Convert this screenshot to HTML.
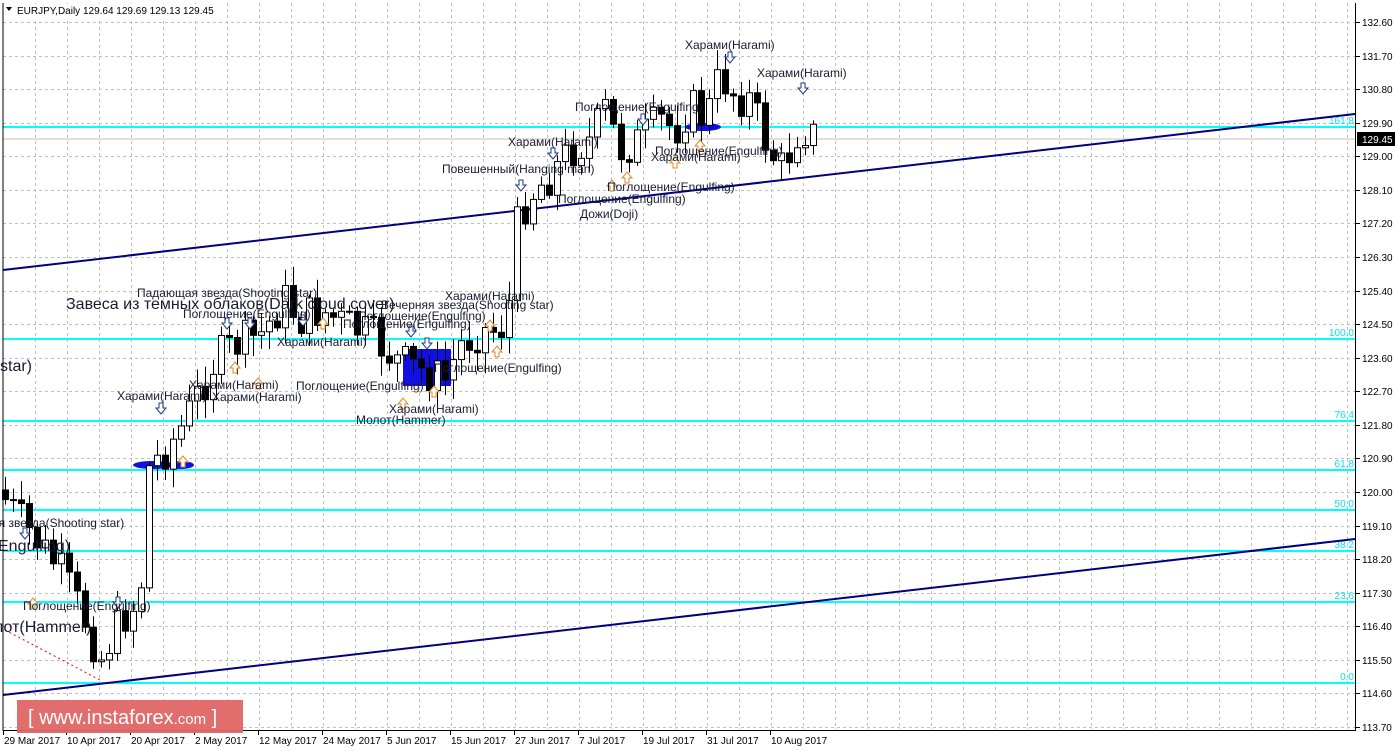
<!DOCTYPE html>
<html><head><meta charset="utf-8"><style>
html,body{margin:0;padding:0;background:#fff;width:1395px;height:751px;overflow:hidden}
svg{display:block}
text{font-family:"Liberation Sans",Arial,sans-serif}
</style></head><body>
<svg id="s" width="1395" height="751" viewBox="0 0 1395 751" xmlns="http://www.w3.org/2000/svg">
<rect width="1395" height="751" fill="#fff"/>
<g id="grid" stroke="#c0c0c0" stroke-dasharray="3,3" stroke-width="1"></g>
<g id="axis" font-size="10" fill="#000"></g>
<g stroke="#00ffff" stroke-width="2">
<line x1="3" y1="127" x2="1355" y2="127"/>
<line x1="3" y1="339" x2="1355" y2="339"/>
<line x1="3" y1="421" x2="1355" y2="421"/>
<line x1="3" y1="470" x2="1355" y2="470"/>
<line x1="3" y1="510" x2="1355" y2="510"/>
<line x1="3" y1="551" x2="1355" y2="551"/>
<line x1="3" y1="602" x2="1355" y2="602"/>
<line x1="3" y1="683" x2="1355" y2="683"/>
</g>
<g fill="#00e5ee" font-size="10" text-anchor="end">
<text x="1354" y="124">161.8</text><text x="1354" y="336">100.0</text>
<text x="1354" y="418">76.4</text><text x="1354" y="467">61.8</text>
<text x="1354" y="507">50.0</text><text x="1354" y="548">38.2</text>
<text x="1354" y="599">23.6</text><text x="1354" y="680">0.0</text>
</g>
<line x1="3" y1="139" x2="1355" y2="139" stroke="#c0c0c0"/>
<line x1="3" y1="270" x2="1355" y2="114" stroke="#000080" stroke-width="2"/>
<line x1="3" y1="695" x2="1355" y2="539" stroke="#000080" stroke-width="2"/>
<line x1="5" y1="630" x2="100" y2="680" stroke="#e00" stroke-dasharray="2,3"/>
<rect x="403" y="349" width="48" height="37" fill="#1010e0"/>
<ellipse cx="153" cy="465" rx="20" ry="4" fill="#1010e0"/>
<ellipse cx="180" cy="465" rx="14" ry="4" fill="#1010e0"/>
<ellipse cx="703" cy="127" rx="18" ry="4" fill="#1010e0"/>
<g id="c"></g>
<g id="arr"></g>
<g fill="#1a1a30" font-size="12">
<text x="685" y="49">Харами(Harami)</text>
<text x="757" y="77">Харами(Harami)</text>
<text x="575" y="111">Поглощение(Engulfing)</text>
<text x="508" y="146">Харами(Harami)</text>
<text x="442" y="173">Повешенный(Hanging man)</text>
<text x="651" y="161">Харами(Harami)</text>
<text x="655" y="155">Поглощение(Engulfing)</text>
<text x="607" y="191">Поглощение(Engulfing)</text>
<text x="558" y="203">Поглощение(Engulfing)</text>
<text x="580" y="218">Дожи(Doji)</text>
<text x="137" y="297">Падающая звезда(Shooting star)</text>
<text x="183" y="318">Поглощение(Engulfing)</text>
<text x="445" y="300">Харами(Harami)</text>
<text x="381" y="309">Вечерняя звезда(Shooting star)</text>
<text x="358" y="320">Поглощение(Engulfing)</text>
<text x="343" y="328">Поглощение(Engulfing)</text>
<text x="277" y="346">Харами(Harami)</text>
<text x="189" y="389">Харами(Harami)</text>
<text x="117" y="400">Харами(Harami)</text>
<text x="212" y="401">Харами(Harami)</text>
<text x="296" y="390">Поглощение(Engulfing)</text>
<text x="434" y="372">Поглощение(Engulfing)</text>
<text x="389" y="413">Харами(Harami)</text>
<text x="356" y="424">Молот(Hammer)</text>
<text x="-8" y="527">ая звезда(Shooting star)</text>
<text x="23" y="610">Поглощение(Engulfing)</text>
<text x="66" y="309" font-size="16">Завеса из темных облаков(Dark cloud cover)</text>
<text x="0" y="371" font-size="16">star)</text>
<text x="-2" y="551" font-size="16">Engulfing)</text>
<text x="-6" y="632" font-size="16">лот(Hammer)</text>
</g>
<line x1="3" y1="3" x2="3" y2="731" stroke="#000"/>
<line x1="3" y1="730.5" x2="1356" y2="730.5" stroke="#000"/>
<line x1="1355.5" y1="3" x2="1355.5" y2="731" stroke="#000"/>
<rect x="1357" y="132" width="38" height="14" fill="#000"/>
<text x="1362" y="143" font-size="10" fill="#fff">129.45</text>
<rect x="4" y="4" width="200" height="14" fill="#fff"/>
<g font-size="10" fill="#000">
<path d="M6 7 L12 7 L9 11Z" fill="#000"/>
<text x="17" y="14">EURJPY,Daily  129.64 129.69 129.13 129.45</text>
</g>
<rect x="17" y="700" width="226" height="33" fill="#e06565" opacity="0.95"/>
<text x="28" y="724" font-size="20" fill="#fff">[ www.instaforex<tspan font-size="15">.com</tspan> ]</text>
</svg>
<script>
(function(){
var NS="http://www.w3.org/2000/svg";
function el(p,t,a){var e=document.createElementNS(NS,t);for(var k in a)e.setAttribute(k,a[k]);p.appendChild(e);return e;}
var g=document.getElementById('grid'),ax=document.getElementById('axis');
for(var x=35;x<1355;x+=32)el(g,'line',{x1:x+.5,y1:3,x2:x+.5,y2:730});
for(var i=0;i<22;i++){var y=22+i*33.57;el(g,'line',{x1:3,y1:Math.round(y)+.5,x2:1355,y2:Math.round(y)+.5});
el(ax,'line',{x1:1356,y1:Math.round(y)+.5,x2:1360,y2:Math.round(y)+.5,stroke:'#000'});
var t=el(ax,'text',{x:1362,y:Math.round(y)+4});t.textContent=(132.6-i*0.9).toFixed(2);}
var dates=[[3,'29 Mar 2017'],[66,'10 Apr 2017'],[130,'20 Apr 2017'],[194,'2 May 2017'],[258,'12 May 2017'],[322,'24 May 2017'],[386,'5 Jun 2017'],[450,'15 Jun 2017'],[514,'27 Jun 2017'],[578,'7 Jul 2017'],[642,'19 Jul 2017'],[706,'31 Jul 2017'],[770,'10 Aug 2017']];
dates.forEach(function(d){el(ax,'line',{x1:d[0]+.5,y1:731,x2:d[0]+.5,y2:735,stroke:'#000'});var t=el(ax,'text',{x:d[0]+1,y:744});t.textContent=d[1];});
var kp=[[5,500],[20,520],[40,545],[60,570],[85,620],[100,660],[110,640],[125,615],[140,600],[147,470],[165,450],[180,430],[195,400],[215,360],[235,345],[260,335],[285,300],[300,320],[320,310],[345,325],[370,335],[395,360],[420,370],[445,380],[460,345],[480,330],[500,330],[510,300],[518,215],[530,195],[550,175],[570,150],[590,140],[605,110],[620,150],[640,140],[660,120],[675,130],[690,105],[705,120],[720,75],[735,95],[750,100],[765,140],[780,170],[790,150],[800,125],[812,135]];
function interp(x){for(var i=0;i<kp.length-1;i++)if(x>=kp[i][0]&&x<=kp[i+1][0]){var a=kp[i],b=kp[i+1];return a[1]+(b[1]-a[1])*(x-a[0])/(b[0]-a[0]);}return kp[kp.length-1][1];}
var seed=7;function r(){seed=(seed*9301+49297)%233280;return seed/233280;}
var cg=document.getElementById('c');var prev=interp(5)-10;
for(var x=5;x<=813;x+=8){var c=interp(x)+(r()-0.5)*42;var o=prev;var hi=Math.min(o,c)-r()*18-3,lo=Math.max(o,c)+r()*18+3;
var xc=Math.round(x)+.5;el(cg,'line',{x1:xc,y1:hi,x2:xc,y2:lo,stroke:'#000'});
var by=Math.min(o,c),bh=Math.max(Math.abs(o-c),1);
el(cg,'rect',{x:xc-3,y:by,width:6,height:bh,fill:(c<o?'#fff':'#000'),stroke:'#000'});
prev=c;}
var ag=document.getElementById('arr');
function down(x,y){el(ag,'path',{d:'M'+(x-2)+' '+y+'h4v5h3l-5 6-5-6h3z',fill:'#fff',stroke:'#1a3a8a'});}
function up(x,y){el(ag,'path',{d:'M'+(x-2)+' '+(y+11)+'h4v-5h3l-5-6-5 6h3z',fill:'#fff',stroke:'#e08a20'});}
[[730,52],[803,83],[643,114],[553,148],[521,180],[161,403],[227,318],[250,318],[303,315],[411,326],[427,338],[25,528],[118,597]].forEach(function(a){down(a[0],a[1]);});
[[675,157],[627,172],[612,180],[497,346],[323,318],[258,378],[235,362],[183,456],[434,386],[403,398],[33,598],[490,320],[700,140]].forEach(function(a){up(a[0],a[1]);});
})();
</script>
</body></html>
